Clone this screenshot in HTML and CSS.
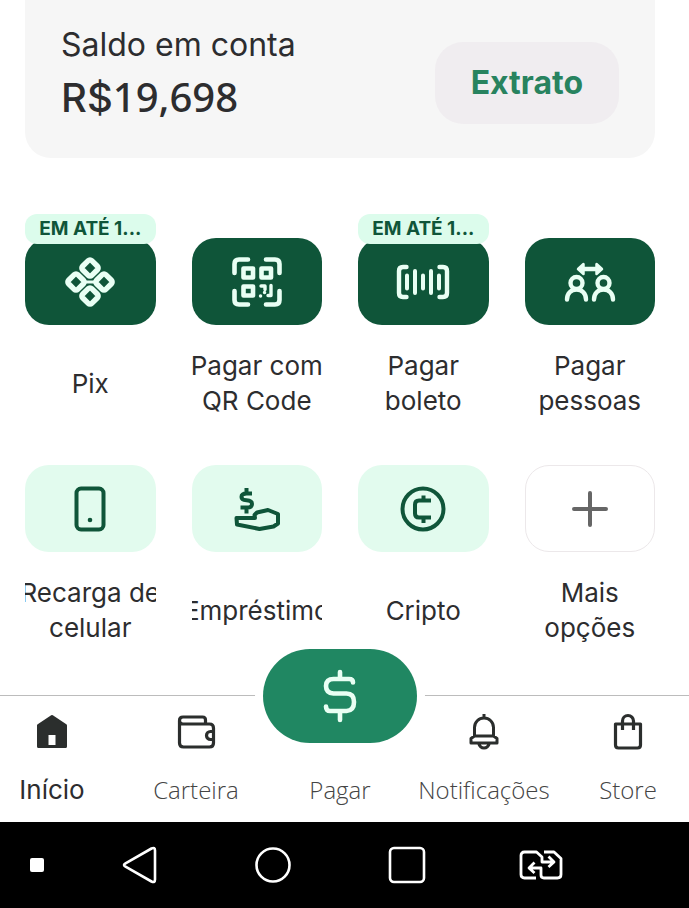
FILE: index.html
```html
<!DOCTYPE html>
<html lang="pt-BR">
<head>
<meta charset="utf-8">
<meta name="viewport" content="width=device-width, initial-scale=1">
<title>Conta</title>
<link rel="stylesheet" href="styles.css">
</head>
<body>
<main class="main">
  <section class="balance">
    <div class="balance-info">
      <p class="balance-label">Saldo em conta</p>
      <p class="balance-value"><span class="currency">R$</span>19,698</p>
    </div>
    <button class="statement" type="button">Extrato</button>
  </section>

  <section class="services">
    <button class="service" type="button">
      <span class="tile dark"><span class="badge">EM ATÉ 1...</span>
        <svg width="52" height="52" viewBox="0 0 52 52" fill="none" stroke="#e9fff4" stroke-width="5.4">
          <rect x="19.500" y="5.500" width="13" height="13" rx="2.500" transform="rotate(45 26 12)"/>
          <rect x="19.500" y="33.500" width="13" height="13" rx="2.500" transform="rotate(45 26 40)"/>
          <rect x="5.500" y="19.500" width="13" height="13" rx="2.500" transform="rotate(45 12 26)"/>
          <rect x="33.500" y="19.500" width="13" height="13" rx="2.500" transform="rotate(45 40 26)"/>
          <path d="M22 26h8" stroke-width="3"/>
        </svg>
      </span>
      <span class="label"><span>Pix</span></span>
    </button>
    <button class="service" type="button">
      <span class="tile dark">
        <svg width="52" height="52" viewBox="0 0 52 52" fill="none" stroke="#e9fff4" stroke-width="4.600" stroke-linecap="round" stroke-linejoin="round">
          <path d="M3.500 17V8q0-4.500 4.500-4.500h9M35 3.500h9q4.500 0 4.500 4.500v9M3.500 35v9q0 4.500 4.500 4.500h9M48.500 35v9q0 4.500-4.500 4.500h-9"/>
          <path d="M12.500 12.500h9.500v9h-9.500zM30.500 12.500h9.500v9h-9.500zM12.500 30.500h9.500v9h-9.500z"/>
          <path d="M40 29.500v10h-3M30 30h4v3.500M29.500 40h.1M33.500 36.500h.1" stroke-width="3.400"/>
        </svg>
      </span>
      <span class="label"><span>Pagar com<br>QR Code</span></span>
    </button>
    <button class="service" type="button">
      <span class="tile dark"><span class="badge">EM ATÉ 1...</span>
        <svg width="54" height="36" viewBox="0 0 54 36" fill="none" stroke="#e9fff4" stroke-width="4.400" stroke-linecap="round" stroke-linejoin="round">
          <path d="M10.500 3H7Q3 3 3 7v22q0 4 4 4h3.500M43.500 3H47q4 0 4 4v22q0 4-4 4h-3.500"/>
          <path d="M11 11.500v13M19 7v22M27 11.500v13M35 7v22M43 11.500v13" stroke-width="4"/>
        </svg>
      </span>
      <span class="label"><span>Pagar<br>boleto</span></span>
    </button>
    <button class="service" type="button">
      <span class="tile dark">
        <svg width="52" height="42" viewBox="0 0 52 42" fill="none" stroke="#e9fff4" stroke-width="4.400" stroke-linecap="round" stroke-linejoin="round">
          <path d="M17 8h18"/>
          <path d="M14 8l5.500-5v10zM38 8l-5.500-5v10z" fill="#e9fff4" stroke-width="2.500"/>
          <circle cx="12.500" cy="22" r="6"/><circle cx="39.500" cy="22" r="6"/>
          <path d="M3 38.500c0-6 4-10 9.500-10s9.500 4 9.500 10M30 38.500c0-6 4-10 9.500-10s9.500 4 9.500 10"/>
        </svg>
      </span>
      <span class="label"><span>Pagar<br>pessoas</span></span>
    </button>
    <button class="service" type="button">
      <span class="tile light">
        <svg width="32" height="46" viewBox="0 0 32 46" fill="none" stroke="#0f5539" stroke-width="4">
          <rect x="2.500" y="2.500" width="27" height="41" rx="4.500"/><circle cx="16" cy="34" r="2.300" fill="#0f5539" stroke="none"/>
        </svg>
      </span>
      <span class="label"><span>Recarga de<br>celular</span></span>
    </button>
    <button class="service" type="button">
      <span class="tile light">
        <svg width="46" height="46" viewBox="0 0 46 46" fill="none" stroke="#0f5539" stroke-width="4" stroke-linejoin="round">
          <path d="M18 7.500h-5.500q-5 0-5 3.500 0 3 5 3.300 5.500.3 5.500 3.700 0 3.500-5 3.500H6.500M12.500 2v5M12.500 21.500v6"/>
          <path d="M2.500 32h18.500l-.5-3 2.500-2.500 11-2.500 10 4v9.500l-4.500 3L25.500 43 3 38.500z"/>
        </svg>
      </span>
      <span class="label"><span>Empréstimo</span></span>
    </button>
    <button class="service" type="button">
      <span class="tile light">
        <svg width="46" height="46" viewBox="0 0 46 46" fill="none" stroke="#0f5539" stroke-width="4">
          <circle cx="23" cy="23" r="20.500"/><path d="M31 14.500H19q-4 0-4 4v9q0 4 4 4h12M23.500 9.500v5M23.500 31.500v5.500"/>
        </svg>
      </span>
      <span class="label"><span>Cripto</span></span>
    </button>
    <button class="service" type="button">
      <span class="tile outline">
        <svg width="36" height="36" viewBox="0 0 36 36" fill="none" stroke="#666" stroke-width="4" stroke-linecap="round"><path d="M18 2v32M2 18h32"/></svg>
      </span>
      <span class="label"><span>Mais<br>opções</span></span>
    </button>
  </section>
</main>

<nav class="tabs">
  <div class="tabs-grid">
    <a class="tab active" href="#inicio">
      <svg width="40" height="40" viewBox="0 0 40 40"><path d="M20 4.500L33.500 13.500v21h-27v-21z" fill="#2b2e2d" stroke="#2b2e2d" stroke-width="3" stroke-linejoin="round"/><path d="M16.500 23h7v10h-7z" fill="#fff"/></svg>
      <span>Início</span>
    </a>
    <a class="tab" href="#carteira">
      <svg width="40" height="40" viewBox="0 0 40 40" fill="none" stroke="#2b2e2d" stroke-width="3.200" stroke-linejoin="round"><path d="M3.500 9V31q0 4 4 4h26q4 0 4-4V16q0-4-4-4H7q-3.500 0-3.500-3.500T7 5h19.500q3 0 3 3v4M37 19.500h-2.500a4 4 0 000 8H37"/></svg>
      <span>Carteira</span>
    </a>
    <a class="tab" href="#pagar">
      <span class="pay">
        <svg width="36" height="54" viewBox="0 0 36 54" fill="none" stroke="#e9fff4" stroke-width="4.600" stroke-linecap="round"><path d="M31 13.500q0-3.500-4-3.500H11.500Q4 10 4 17t7.500 7.500h13Q32 24.500 32 33t-7.500 9H8q-4 0-4-4.500M18 3v7M18 42v9"/></svg>
      </span>
      <span>Pagar</span>
    </a>
    <a class="tab" href="#notificacoes">
      <svg width="40" height="40" viewBox="0 0 40 40" fill="none" stroke="#2b2e2d" stroke-width="3" stroke-linejoin="round"><path d="M20 2v4M10.500 24v-8.500a9.500 9.500 0 0119 0V24M10.500 24h19l3.500 2.500V31H7v-4.500zM14.500 31q1.500 5 5.500 5t5.500-5"/></svg>
      <span>Notificações</span>
    </a>
    <a class="tab" href="#store">
      <svg width="40" height="40" viewBox="0 0 40 40" fill="none" stroke="#2b2e2d" stroke-width="3.200" stroke-linejoin="round"><path d="M7.500 12h25v21q0 3-3 3h-19q-3 0-3-3zM14.500 18v-9a5.500 5.500 0 0111 0v9"/></svg>
      <span>Store</span>
    </a>
  </div>
</nav>

<footer class="system">
  <span class="dot"></span>
  <button type="button" aria-label="Voltar"><svg width="36" height="38" viewBox="0 0 36 38" fill="none" stroke="#fff" stroke-width="2.600" stroke-linejoin="round"><path d="M3.500 17.300L29.500 2.500q3.500-1.500 3.500 2v29q0 3.500-3.500 2L3.500 20.700q-3-1.700 0-3.400z"/></svg></button>
  <button type="button" aria-label="Tela inicial"><svg width="38" height="38" viewBox="0 0 38 38" fill="none" stroke="#fff" stroke-width="2.600"><circle cx="19" cy="19" r="16.500"/></svg></button>
  <button type="button" aria-label="Recentes"><svg width="38" height="38" viewBox="0 0 38 38" fill="none" stroke="#fff" stroke-width="2.600"><rect x="2" y="2" width="34" height="34" rx="4"/></svg></button>
  <button type="button" aria-label="Alternar"><svg width="44" height="30" viewBox="0 0 44 30" fill="none" stroke="#fff" stroke-width="2.800" stroke-linejoin="round"><path d="M17 28H5.500Q2 28 2 24.500v-19Q2 2 5.500 2h12l5.500 5v5h11M29.500 6.500l5.500 5.500-5.500 5M25 2h10l7 6.500v16q0 3.500-3.500 3.500H25q-3 0-3-3v-7H10M15.500 12.500L10 18l5.500 5"/></svg></button>
</footer>
</body>
</html>
```

FILE: styles.css
```css
* {
  box-sizing: border-box;
}

body {
  margin: 0;
  min-height: 100vh;
  display: flex;
  flex-direction: column;
  background: #fff;
  color: #2d2d2f;
  font-family: Inter, "Liberation Sans", sans-serif;
  overflow-x: hidden;
}

button {
  border: 0;
  padding: 0;
  background: none;
  color: inherit;
  font: inherit;
  cursor: pointer;
}

svg {
  display: block;
  flex: none;
}

.main {
  flex: 1;
  padding: 0 34px 49px 25px;
}

.balance {
  display: flex;
  justify-content: space-between;
  align-items: flex-start;
  padding: 24px 36px 30px;
  border-radius: 0 0 26px 26px;
  background: #f6f6f6;
}

.balance p {
  margin: 0;
}

.balance-label {
  font-size: 32px;
  line-height: 42px;
}

.balance-value {
  font-family: "Noto Sans", sans-serif;
  font-size: 40px;
  font-weight: 500;
  line-height: 62px;
}

.currency {
  font-family: Inter, sans-serif;
  line-height: 1;
}

.statement {
  margin-top: 18px;
  padding: 0 36px;
  border-radius: 28px;
  background: #f0edf0;
  color: #28835f;
  font-size: 32px;
  font-weight: 700;
  line-height: 82px;
}

.services {
  display: grid;
  grid-template-columns: repeat(4, minmax(0, 1fr));
  gap: 47px 36px;
  padding-top: 80px;
}

.service {
  display: flex;
  flex-direction: column;
  gap: 23px;
}

.tile {
  position: relative;
  display: flex;
  align-items: center;
  justify-content: center;
  width: 100%;
  height: 87px;
  border-radius: 24px;
}

.dark {
  background: #0f5539;
}

.light {
  background: #e2fbee;
}

.outline {
  border: 1px solid #ece8ea;
}

.badge {
  position: absolute;
  top: -24px;
  left: 0;
  right: 0;
  border-radius: 12px;
  background: #dcfcec;
  color: #0f5539;
  font-size: 19px;
  font-weight: 700;
  line-height: 30px;
  text-align: center;
}

.label {
  display: flex;
  align-items: center;
  justify-content: center;
  width: 100%;
  height: 70px;
  overflow: hidden;
  font-size: 26px;
  line-height: 35px;
  white-space: nowrap;
}

.tabs {
  border-top: 1px solid #bcbcbc;
}

.tabs-grid {
  display: grid;
  grid-template-columns: repeat(5, minmax(0, 1fr));
  margin: 0 -11px 0 -20px;
}

.tab {
  position: relative;
  display: flex;
  flex-direction: column;
  align-items: center;
  justify-content: flex-end;
  gap: 20px;
  padding: 16px 0 14px;
  color: #444;
  font-family: "Open Sans", sans-serif;
  font-size: 24px;
  font-weight: 300;
  line-height: 36px;
  text-decoration: none;
}

.active {
  color: #2d2d2f;
  font-family: Inter, sans-serif;
  font-size: 26px;
  font-weight: 400;
}

.pay {
  position: absolute;
  top: -47px;
  display: flex;
  align-items: center;
  justify-content: center;
  width: 154px;
  height: 94px;
  border-radius: 47px;
  background: #208762;
  box-shadow: 0 0 0 8px #fff;
}

.system {
  display: grid;
  grid-template-columns: 74fr 132fr 134fr 134fr 134fr 81fr;
  place-items: center;
  height: 86px;
  background: #000;
}

.dot {
  width: 14px;
  height: 14px;
  border-radius: 2px;
  background: #fff;
}
```
